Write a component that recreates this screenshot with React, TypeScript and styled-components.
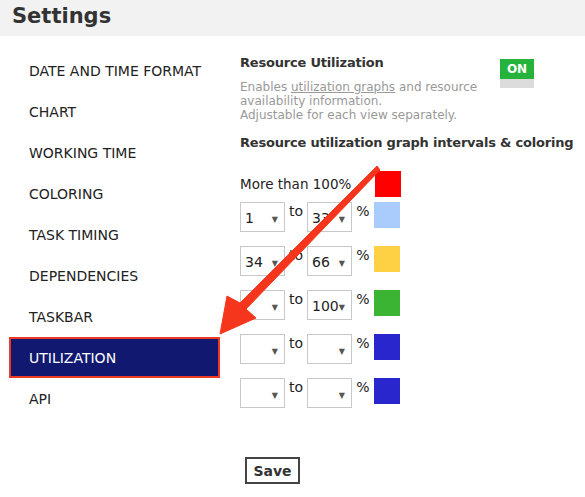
import React from "react";
import styled, { createGlobalStyle } from "styled-components";

const GlobalStyle = createGlobalStyle`
  html, body {
    margin: 0;
    padding: 0;
    background: #fff;
    font-family: "DejaVu Sans", "Liberation Sans", sans-serif;
  }
`;

const navItems = [
  "DATE AND TIME FORMAT",
  "CHART",
  "WORKING TIME",
  "COLORING",
  "TASK TIMING",
  "DEPENDENCIES",
  "TASKBAR",
  "UTILIZATION",
  "API",
];

const ranges = [
  { from: "1", to: "33", color: "#aaccfd" },
  { from: "34", to: "66", color: "#fed145" },
  { from: "", to: "100", color: "#3cb433" },
  { from: "", to: "", color: "#2826cc" },
  { from: "", to: "", color: "#2826cc" },
];

export default function App() {
  return (
    <Page>
      <GlobalStyle />
      <Header>
        <Heading>Settings</Heading>
      </Header>
      <Main>
        <Nav>
          {navItems.map((item) => (
            <NavItem key={item} $active={item === "UTILIZATION"}>
              {item}
            </NavItem>
          ))}
        </Nav>
        <Panel>
          <Intro>
            <Title>Resource Utilization</Title>
            <Toggle>
              <ToggleOn>ON</ToggleOn>
              <ToggleOff />
            </Toggle>
            <Description>
              Enables <u>utilization graphs</u> and resource
              <br />
              availability information.
              <br />
              Adjustable for each view separately.
            </Description>
          </Intro>
          <Title $space={12}>Resource utilization graph intervals &amp; coloring</Title>
          <TopRow>
            <Label>More than 100%</Label>
            <Swatch $color="#fe0000" />
          </TopRow>
          {ranges.map((r, i) => (
            <RangeRow key={i}>
              <Dropdown>
                <span>{r.from}</span>
                <Caret>▼</Caret>
              </Dropdown>
              <Word>to</Word>
              <Dropdown>
                <span>{r.to}</span>
                <Caret>▼</Caret>
              </Dropdown>
              <Word>%</Word>
              <Swatch $color={r.color} />
            </RangeRow>
          ))}
          <SaveButton type="button">Save</SaveButton>
        </Panel>
      </Main>
      <Arrow width="585" height="497" viewBox="0 0 585 497">
        <polygon
          points="220,334 227,296 240,303 377,166 380,170 246,309 256,318"
          fill="#f6361c"
          stroke="#f6361c"
          strokeWidth="1"
          strokeLinejoin="round"
        />
      </Arrow>
    </Page>
  );
}

const Page = styled.div`
  position: relative;
  width: 585px;
  height: 497px;
  overflow: hidden;
  color: #222;
`;

const Header = styled.header`
  box-sizing: border-box;
  height: 36px;
  background: #f2f2f2;
  display: flex;
  align-items: center;
  padding: 0 0 4px 12px;
`;

const Heading = styled.h1`
  margin: 0;
  font-size: 21px;
  font-weight: bold;
  color: #333;
`;

const Main = styled.div`
  display: flex;
  padding-top: 14px;
`;

const Nav = styled.nav`
  width: 211px;
  margin-left: 9px;
  display: flex;
  flex-direction: column;
`;

const NavItem = styled.div<{ $active?: boolean }>`
  box-sizing: border-box;
  height: 41px;
  display: flex;
  align-items: center;
  padding-left: 18px;
  font-size: 14px;
  color: ${(p) => (p.$active ? "#fff" : "#222")};
  background: ${(p) => (p.$active ? "#101870" : "transparent")};
  border: ${(p) => (p.$active ? "2px solid #ec3b22" : "2px solid transparent")};
`;

const Panel = styled.section`
  flex: 1;
  margin-left: 20px;
  display: flex;
  flex-direction: column;
  align-items: flex-start;
`;

const Intro = styled.div`
  display: grid;
  grid-template-columns: 260px 34px;
  margin-top: 4px;
  width: 294px;
`;

const Title = styled.div<{ $space?: number }>`
  margin-top: ${(p) => p.$space ?? 0}px;
  font-size: 13px;
  font-weight: bold;
  letter-spacing: -0.2px;
  color: #333;
  line-height: 18px;
  white-space: nowrap;
`;

const Toggle = styled.div`
  grid-column: 2;
  grid-row: 1 / span 2;
  margin-top: 5px;
  display: flex;
  flex-direction: column;
  width: 34px;
`;

const ToggleOn = styled.div`
  height: 20px;
  background: #25b33b;
  color: #fff;
  font-size: 12px;
  font-weight: bold;
  display: flex;
  align-items: center;
  justify-content: center;
`;

const ToggleOff = styled.div`
  height: 9px;
  background: #dcdcdc;
`;

const Description = styled.p`
  grid-column: 1;
  margin: 8px 0 0;
  font-size: 12px;
  line-height: 14px;
  color: #999;
  white-space: nowrap;
`;

const TopRow = styled.div`
  display: flex;
  align-items: center;
  margin-top: 19px;
`;

const Label = styled.span`
  width: 135px;
  font-size: 13.5px;
  color: #222;
  white-space: nowrap;
`;

const RangeRow = styled.div`
  display: flex;
  align-items: flex-start;
  margin-top: 5px;
  height: 30px;
  & + & {
    margin-top: 14px;
  }
`;

const Dropdown = styled.div`
  box-sizing: border-box;
  width: 45px;
  height: 30px;
  border: 1px solid #c8c8c8;
  display: flex;
  align-items: center;
  justify-content: space-between;
  padding: 2px 6px 0 4px;
  font-size: 14px;
  color: #222;
`;

const Caret = styled.span`
  font-size: 8px;
  color: #555;
  margin-top: 3px;
`;

const Word = styled.span`
  font-size: 14px;
  color: #222;
  width: 22px;
  text-align: center;
  margin-top: 1px;
`;

const Swatch = styled.div<{ $color: string }>`
  width: 26px;
  height: 26px;
  background: ${(p) => p.$color};
`;

const SaveButton = styled.button`
  margin: 49px 0 0 5px;
  width: 55px;
  height: 27px;
  background: #fff;
  border: 2px solid #444;
  font-family: inherit;
  font-size: 14px;
  font-weight: bold;
  color: #333;
  padding: 0;
`;

const Arrow = styled.svg`
  position: absolute;
  left: 0;
  top: 0;
  pointer-events: none;
`;
